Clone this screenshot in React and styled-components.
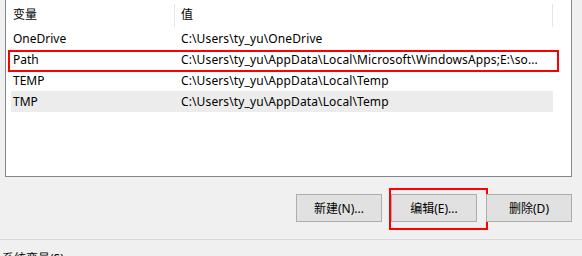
import React from 'react';
import styled, { createGlobalStyle } from 'styled-components';

const GlobalStyle = createGlobalStyle`
  html, body {
    margin: 0;
    padding: 0;
    background: #f0f0f0;
    overflow: hidden;
  }
  body {
    font-family: "Noto Sans", "Noto Sans CJK SC", sans-serif;
    font-size: 12px;
    color: #000;
  }
`;

// user variables, the visible part of the list
const vars = [
  { name: 'OneDrive', value: 'C:\\Users\\ty_yu\\OneDrive' },
  { name: 'Path', value: 'C:\\Users\\ty_yu\\AppData\\Local\\Microsoft\\WindowsApps;E:\\so...', marked: true },
  { name: 'TEMP', value: 'C:\\Users\\ty_yu\\AppData\\Local\\Temp' },
  { name: 'TMP', value: 'C:\\Users\\ty_yu\\AppData\\Local\\Temp', selected: true },
];

const Page = styled.div`
  width: 582px;
  height: 256px;
  display: flex;
  flex-direction: column;
`;

const ListBox = styled.div`
  flex: none;
  margin-left: 5px;
  width: 567px;
  height: 177px;
  box-sizing: border-box;
  background: #fff;
  border: 1px solid #828790;
  border-top: none;
  padding-left: 5px;
`;

const HeaderRow = styled.div`
  display: flex;
  align-items: flex-start;
  height: 28px;
  padding-top: 4px;
  box-sizing: border-box;
`;

const HeaderCell = styled.div`
  width: ${p => p.w}px;
  height: 23px;
  display: flex;
  align-items: center;
  padding-left: ${p => p.pad}px;
  padding-bottom: 2px;
  box-sizing: border-box;
  border-right: 1px solid #e5e5e5;
  line-height: 1;
`;

const Row = styled.div`
  position: relative;
  display: flex;
  align-items: center;
  width: 542px;
  height: 21px;
  background: ${p => (p.selected ? '#ececec' : 'transparent')};
`;

const Cell = styled.div`
  width: ${p => p.w}px;
  padding-left: ${p => p.pad}px;
  padding-bottom: 1px;
  box-sizing: border-box;
  white-space: nowrap;
  overflow: hidden;
  letter-spacing: ${p => p.ls || 0}px;
`;

// hand drawn red annotation boxes
const Mark = styled.div`
  position: absolute;
  top: ${p => p.t}px;
  right: ${p => p.r}px;
  bottom: ${p => p.b}px;
  left: ${p => p.l}px;
  border: 2px solid #f00;
  pointer-events: none;
`;

const ButtonBar = styled.div`
  flex: none;
  display: flex;
  justify-content: flex-end;
  gap: 9px;
  padding: 17px 10px 0 0;
  height: 62px;
  box-sizing: border-box;
`;

const Button = styled.div`
  position: relative;
  width: 86px;
  height: 28px;
  box-sizing: border-box;
  background: #e1e1e1;
  border: 1px solid #adadad;
  display: flex;
  align-items: center;
  justify-content: center;
`;

const Divider = styled.div`
  flex: none;
  height: 1px;
  background: #d9d9d9;
`;

const SectionLabel = styled.div`
  padding: 11px 0 0 2px;
  line-height: 16px;
`;

export default function App() {
  return (
    <>
      <GlobalStyle />
      <Page>
        <ListBox>
          <HeaderRow>
            <HeaderCell w={164} pad={2}>变量</HeaderCell>
            <HeaderCell w={378} pad={6}>值</HeaderCell>
          </HeaderRow>
          {vars.map(v => (
            <Row key={v.name} selected={v.selected}>
              <Cell w={164} pad={2}>{v.name}</Cell>
              <Cell w={378} pad={6} ls={0.12}>{v.value}</Cell>
              {v.marked && <Mark t={1} r={-6} b={-2} l={-3} />}
            </Row>
          ))}
        </ListBox>
        <ButtonBar>
          <Button>新建(N)...</Button>
          <Button>
            编辑(E)...
            <Mark t={-7} r={-12} b={-9} l={-3} />
          </Button>
          <Button>删除(D)</Button>
        </ButtonBar>
        <Divider />
        <SectionLabel>系统变量(S)</SectionLabel>
      </Page>
    </>
  );
}
